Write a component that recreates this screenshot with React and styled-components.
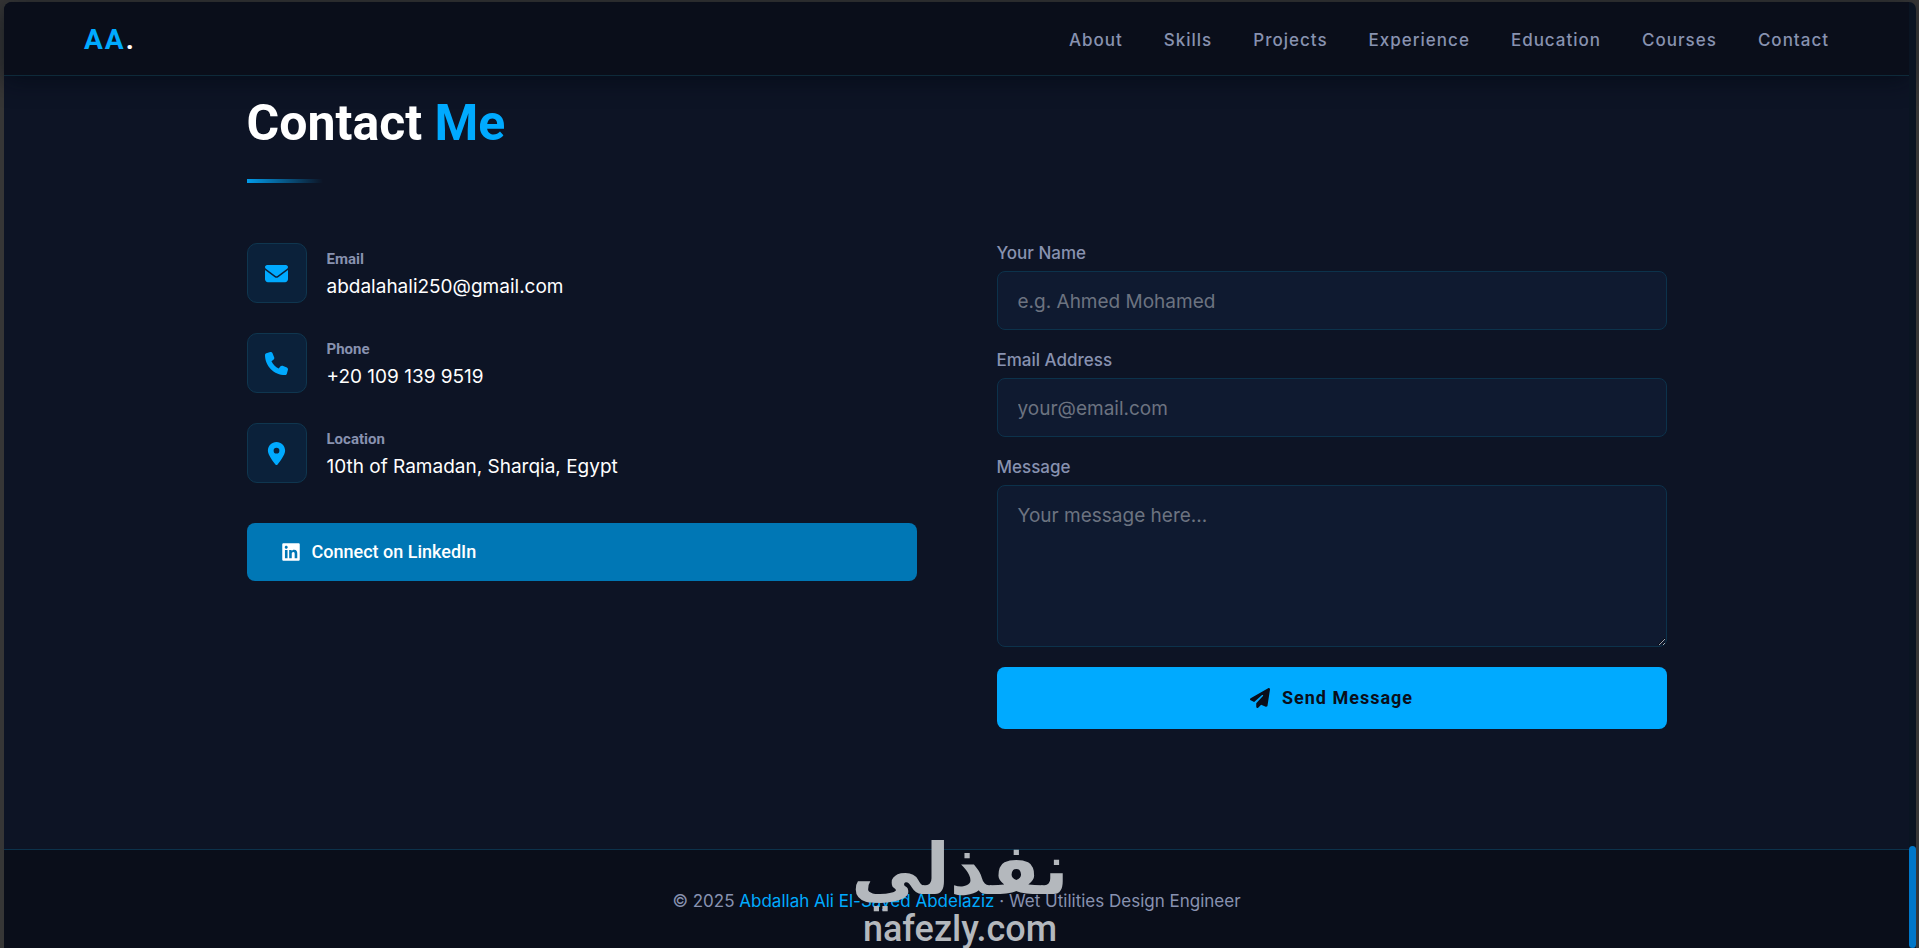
import React from "react";
import styled, { createGlobalStyle } from "styled-components";
import {
  FaEnvelope,
  FaPhone,
  FaLocationDot,
  FaLinkedin,
  FaPaperPlane,
} from "react-icons/fa6";

const display = `Roboto, "Liberation Sans", sans-serif`;
const accent = "#00aaff";

const GlobalStyle = createGlobalStyle`
  * { box-sizing: border-box; }
  body {
    margin: 0;
    background: #363636;
    color: #ffffff;
    font-family: Inter, "Liberation Sans", sans-serif;
  }
`;

const Window = styled.div`
  position: relative;
  display: flex;
  min-height: 100vh;
  border: solid #363636;
  border-width: 2px 3px 0 4px;
`;

const Page = styled.div`
  flex: 1;
  min-width: 0;
  display: flex;
  flex-direction: column;
  background: #0d1425;
  border-top-left-radius: 8px;
`;

const ScrollTrack = styled.div`
  width: 7px;
  display: flex;
  flex-direction: column;
  justify-content: flex-end;
  background: #0a1422;
  border-top-right-radius: 8px;
`;

const ScrollThumb = styled.div`
  height: 102px;
  border-radius: 4px;
  background: #0077c8;
`;

const Header = styled.header`
  display: flex;
  align-items: center;
  justify-content: space-between;
  height: 74px;
  padding: 2px 80px 0;
  background: #0a0e1a;
  border-bottom: 1px solid #0e2a3a;
  border-top-left-radius: 8px;
  box-shadow: 0 4px 24px rgba(2, 8, 18, 0.6);
`;

const Logo = styled.a`
  font: 700 28px/36px ${display};
  letter-spacing: 2px;
  color: ${accent};
  text-decoration: none;

  span { color: #ffffff; }
`;

const Nav = styled.nav`
  display: flex;
  gap: 41px;
`;

const NavLink = styled.a`
  font-size: 17px;
  font-weight: 500;
  line-height: 24px;
  letter-spacing: 1px;
  color: #8892b0;
  text-decoration: none;
`;

const Section = styled.section`
  width: 100%;
  max-width: 1420px;
  margin: 0 auto;
  padding: 17px 0 120px;
`;

const Title = styled.h2`
  margin: 0;
  font: 700 50px/60px ${display};

  span { color: ${accent}; }

  &::after {
    content: "";
    display: block;
    width: 76px;
    height: 4px;
    margin: 26px 0 60px;
    background: linear-gradient(90deg, ${accent}, transparent);
    opacity: 0.9;
  }
`;

const Columns = styled.div`
  display: grid;
  grid-template-columns: 1fr 1fr;
  gap: 80px;
`;

const Info = styled.div`
  display: flex;
  flex-direction: column;
  gap: 30px;
`;

const InfoItem = styled.div`
  display: flex;
  gap: 20px;
`;

const IconBox = styled.div`
  display: flex;
  align-items: center;
  justify-content: center;
  width: 60px;
  height: 60px;
  border: 1px solid #0f364f;
  border-radius: 10px;
  background: #0b213a;
  color: ${accent};
  font-size: 23px;
`;

const InfoLabel = styled.h4`
  margin: 4px 0 0;
  font: 700 15px/24px ${display};
  color: #8892b0;
`;

const InfoValue = styled.p`
  margin: 0;
  font-size: 19px;
  line-height: 32px;
`;

const LinkedInLink = styled.a`
  display: flex;
  align-items: center;
  gap: 12px;
  height: 58px;
  margin-top: 10px;
  padding: 0 35px;
  border-radius: 8px;
  background: #0077b5;
  color: #ffffff;
  font: 500 18px/24px ${display};
  text-decoration: none;

  svg { width: 18px; height: 20px; }
`;

const Form = styled.form`
  display: flex;
  flex-direction: column;
  gap: 20px;
`;

const Field = styled.div`
  display: flex;
  flex-direction: column;
  gap: 8px;

  label {
    font-size: 17px;
    font-weight: 500;
    line-height: 20px;
    color: #8892b0;
  }

  input,
  textarea {
    display: block;
    width: 100%;
    height: 59px;
    padding: 17px 20px 15px;
    border: 1px solid #0c324b;
    border-radius: 8px;
    background: #0f1a30;
    color: #ffffff;
    font: 400 19px/25px Inter, "Liberation Sans", sans-serif;
  }

  textarea {
    height: 162px;
    resize: vertical;
  }

  ::placeholder { color: #6c7380; }
`;

const SendButton = styled.button`
  display: flex;
  align-items: center;
  justify-content: center;
  gap: 12px;
  height: 62px;
  border: 0;
  border-radius: 8px;
  background: ${accent};
  color: #0a0e1a;
  font: 700 18px/24px ${display};
  letter-spacing: 1px;
  cursor: pointer;

  svg { width: 20px; height: 20px; }
`;

const Footer = styled.footer`
  flex: 1;
  padding: 39px 20px 24px;
  border-top: 1px solid #0c324b;
  background: #0a0e1a;
  color: #8892b0;
  font-size: 17px;
  line-height: 24px;
  text-align: center;

  span { color: ${accent}; }
`;

const Watermark = styled.div`
  position: absolute;
  left: 0;
  right: 0;
  bottom: 0;
  display: flex;
  flex-direction: column;
  align-items: center;
  color: #b4b8bd;
  pointer-events: none;
`;

const WatermarkArabic = styled.span`
  font: 700 71px/80px "DejaVu Sans", sans-serif;
`;

const WatermarkDomain = styled.span`
  font: 500 36px/38px ${display};
`;

const links = ["About", "Skills", "Projects", "Experience", "Education", "Courses", "Contact"];

const details = [
  { icon: FaEnvelope, label: "Email", value: "abdalahali250@gmail.com" },
  { icon: FaPhone, label: "Phone", value: "+20 109 139 9519" },
  { icon: FaLocationDot, label: "Location", value: "10th of Ramadan, Sharqia, Egypt" },
];

export default function App() {
  return (
    <Window>
      <GlobalStyle />
      <Page>
        <Header>
          <Logo href="#home">AA<span>.</span></Logo>
          <Nav>
            {links.map((name) => (
              <NavLink key={name} href={`#${name.toLowerCase()}`}>{name}</NavLink>
            ))}
          </Nav>
        </Header>
        <Section id="contact">
          <Title>Contact <span>Me</span></Title>
          <Columns>
            <Info>
              {details.map(({ icon: Icon, label, value }) => (
                <InfoItem key={label}>
                  <IconBox><Icon /></IconBox>
                  <div>
                    <InfoLabel>{label}</InfoLabel>
                    <InfoValue>{value}</InfoValue>
                  </div>
                </InfoItem>
              ))}
              <LinkedInLink href="#linkedin"><FaLinkedin />Connect on LinkedIn</LinkedInLink>
            </Info>
            <Form onSubmit={(e) => e.preventDefault()}>
              <Field>
                <label htmlFor="name">Your Name</label>
                <input id="name" type="text" placeholder="e.g. Ahmed Mohamed" />
              </Field>
              <Field>
                <label htmlFor="email">Email Address</label>
                <input id="email" type="email" placeholder="your@email.com" />
              </Field>
              <Field>
                <label htmlFor="message">Message</label>
                <textarea id="message" placeholder="Your message here..." />
              </Field>
              <SendButton type="submit"><FaPaperPlane />Send Message</SendButton>
            </Form>
          </Columns>
        </Section>
        <Footer>
          © 2025 <span>Abdallah Ali El-Sayed Abdelaziz</span> · Wet Utilities Design Engineer
        </Footer>
      </Page>
      <ScrollTrack><ScrollThumb /></ScrollTrack>
      <Watermark>
        <WatermarkArabic lang="ar" dir="rtl">نفذلي</WatermarkArabic>
        <WatermarkDomain>nafezly.com</WatermarkDomain>
      </Watermark>
    </Window>
  );
}
